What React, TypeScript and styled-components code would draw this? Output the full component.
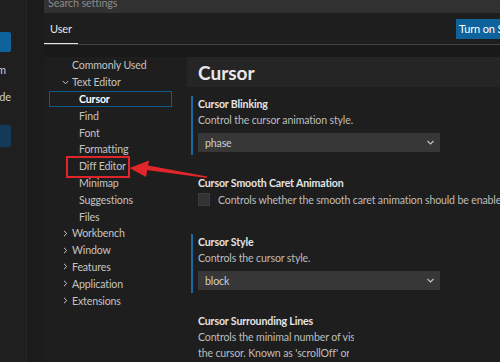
import React from "react";
import styled, { createGlobalStyle } from "styled-components";

const Global = createGlobalStyle`
  html, body { margin: 0; padding: 0; background: #1e1e1e; }
  body { width: 500px; height: 362px; overflow: hidden; font-family: Lato, "Noto Sans", sans-serif; }
  * { box-sizing: border-box; }
`;

const Page = styled.div`
  position: relative;
  display: flex;
  width: 500px;
  height: 362px;
  overflow: hidden;
  background: #1e1e1e;
  color: #cccccc;
  font-size: 10.6px;
  letter-spacing: -0.15px;
`;

const SideStrip = styled.div`
  width: 44px;
  flex: none;
  display: flex;
  background: #1b1b1b;
`;

const SideInner = styled.div`
  width: 27px;
  border-right: 1px solid #262626;
  background: #1f1f1f;
  overflow: hidden;
  display: flex;
  flex-direction: column;
  align-items: flex-end;
  padding-top: 32px;
`;

const SideButton = styled.div<{ $dim?: boolean; $top: number; $h: number }>`
  flex: none;
  width: 80px;
  height: ${(p) => p.$h}px;
  margin-top: ${(p) => p.$top}px;
  margin-right: 15px;
  border-radius: 2px;
  background: ${(p) => (p.$dim ? "#143a5a" : "#0e639c")};
`;

const SideLabel = styled.div<{ $top: number; $right: number }>`
  flex: none;
  line-height: 16px;
  font-size: 11px;
  margin-top: ${(p) => p.$top}px;
  margin-right: ${(p) => p.$right}px;
  white-space: nowrap;
  color: #cccccc;
`;

const Panel = styled.div`
  flex: 1;
  min-width: 0;
  display: flex;
  flex-direction: column;
`;

const SearchBar = styled.div`
  height: 13px;
  flex: none;
  background: #313131;
  display: flex;
  align-items: flex-end;
  overflow: hidden;
  padding-left: 4px;
`;

const SearchText = styled.span`
  line-height: 14px;
  margin-bottom: 3px;
  font-size: 10.8px;
  color: #8a8a8a;
  white-space: nowrap;
`;

const TabsRow = styled.div`
  height: 32px;
  flex: none;
  display: flex;
  border-bottom: 1px solid #45443c;
  overflow: hidden;
`;

const Tab = styled.div`
  flex: none;
  display: flex;
  align-items: center;
  padding: 0 6px;
  font-size: 11px;
  color: #e7e7e7;
  border-bottom: 1px solid #e7e7e7;
`;

const ButtonSlot = styled.div`
  flex: none;
  width: 44px;
  margin-left: auto;
  display: flex;
  align-items: center;
`;

const SyncButton = styled.div`
  flex: none;
  height: 20px;
  padding: 0 3px;
  display: flex;
  align-items: center;
  white-space: nowrap;
  font-size: 11px;
  background: #0e639c;
  color: #ffffff;
`;

const Band = styled.div`
  height: 12px;
  flex: none;
  background: #191919;
`;

const Body = styled.div`
  flex: 1;
  display: flex;
  min-height: 0;
`;

const Toc = styled.div`
  width: 143px;
  flex: none;
  padding-left: 5px;
  display: flex;
  flex-direction: column;
`;

const TocItem = styled.div<{ $indent: number; $selected?: boolean }>`
  width: 123px;
  height: 16.8px;
  display: flex;
  align-items: center;
  padding-left: ${(p) => p.$indent}px;
  white-space: nowrap;
  color: ${(p) => (p.$selected ? "#ffffff" : "#c4c4c4")};
  font-weight: ${(p) => (p.$selected ? 700 : 400)};
  box-shadow: ${(p) => (p.$selected ? "inset 0 0 0 1px #0f5a8a" : "none")};
`;

const Twisty = styled.span`
  width: 10px;
  flex: none;
  display: flex;
  align-items: center;
`;

const Content = styled.div`
  flex: 1;
  min-width: 0;
  display: flex;
  flex-direction: column;
  overflow: hidden;
`;

const Header = styled.div`
  height: 30px;
  flex: none;
  background: #252526;
  display: flex;
  align-items: center;
  padding-left: 11px;
  font-size: 19px;
  font-weight: 700;
  letter-spacing: 0;
  color: #e8e8e8;
`;

const SettingsList = styled.div`
  display: flex;
  flex-direction: column;
  gap: 20px;
  padding-top: 9px;
`;

const SettingItem = styled.div<{ $focused?: boolean; $bottom?: number }>`
  margin-left: 4px;
  border-left: 2px solid ${(p) => (p.$focused ? "#1a6aa3" : "transparent")};
  padding-left: 5px;
  padding-bottom: ${(p) => p.$bottom ?? 3}px;
`;

const Title = styled.div`
  line-height: 16px;
  font-weight: 700;
  color: #e4e4e4;
  white-space: nowrap;
`;

const Desc = styled.div<{ $clip?: number }>`
  line-height: 16px;
  color: #bdbdbd;
  white-space: nowrap;
  overflow: hidden;
  max-width: ${(p) => (p.$clip ? `${p.$clip}px` : "none")};
`;

const Select = styled.div`
  margin-top: 5px;
  width: 242px;
  height: 19px;
  background: #373737;
  display: flex;
  align-items: center;
  justify-content: space-between;
  padding: 0 5px 0 7px;
  color: #d0d0d0;
`;

const CheckRow = styled.div`
  margin-top: 2px;
  display: flex;
  align-items: center;
  gap: 8px;
  white-space: nowrap;
  color: #bdbdbd;
`;

const CheckBox = styled.div`
  width: 12px;
  height: 13px;
  flex: none;
  background: #333333;
  border: 1px solid #3b3b3b;
`;

const Overlay = styled.svg`
  position: absolute;
  left: 0;
  top: 0;
  pointer-events: none;
`;

const Chevron = ({ open }: { open?: boolean }) => (
  <svg width="7" height="7" viewBox="0 0 7 7">
    {open ? (
      <path d="M0.8 2 L3.5 4.8 L6.2 2" fill="none" stroke="#c5c5c5" strokeWidth="1" />
    ) : (
      <path d="M2 0.8 L4.8 3.5 L2 6.2" fill="none" stroke="#c5c5c5" strokeWidth="1" />
    )}
  </svg>
);

const SelectChevron = () => (
  <svg width="9" height="9" viewBox="0 0 9 9">
    <path d="M1.5 3 L4.5 6 L7.5 3" fill="none" stroke="#c5c5c5" strokeWidth="1.1" />
  </svg>
);

type TocEntry = { label: string; indent: number; twisty?: "open" | "closed"; selected?: boolean };

const tocItems: TocEntry[] = [
  { label: "Commonly Used", indent: 23 },
  { label: "Text Editor", indent: 13, twisty: "open" },
  { label: "Cursor", indent: 30, selected: true },
  { label: "Find", indent: 30 },
  { label: "Font", indent: 30 },
  { label: "Formatting", indent: 30 },
  { label: "Diff Editor", indent: 30 },
  { label: "Minimap", indent: 30 },
  { label: "Suggestions", indent: 30 },
  { label: "Files", indent: 30 },
  { label: "Workbench", indent: 13, twisty: "closed" },
  { label: "Window", indent: 13, twisty: "closed" },
  { label: "Features", indent: 13, twisty: "closed" },
  { label: "Application", indent: 13, twisty: "closed" },
  { label: "Extensions", indent: 13, twisty: "closed" },
];

export default function App() {
  return (
    <Page>
      <Global />
      <SideStrip>
        <SideInner>
          <SideButton $top={0} $h={20} />
          <SideLabel $top={10} $right={20}>Custom</SideLabel>
          <SideLabel $top={11} $right={15}>Mode</SideLabel>
          <SideButton $top={20} $h={22} $dim />
        </SideInner>
      </SideStrip>
      <Panel>
        <SearchBar>
          <SearchText>Search settings</SearchText>
        </SearchBar>
        <TabsRow>
          <Tab>User</Tab>
          <ButtonSlot>
            <SyncButton>Turn on Settings Sync</SyncButton>
          </ButtonSlot>
        </TabsRow>
        <Band />
        <Body>
          <Toc>
            {tocItems.map((t) => (
              <TocItem key={t.label} $indent={t.indent} $selected={t.selected}>
                {t.twisty && (
                  <Twisty>
                    <Chevron open={t.twisty === "open"} />
                  </Twisty>
                )}
                {t.label}
              </TocItem>
            ))}
          </Toc>
          <Content>
            <Header>Cursor</Header>
            <SettingsList>
              <SettingItem $focused>
                <Title>Cursor Blinking</Title>
                <Desc>Control the cursor animation style.</Desc>
                <Select>
                  <span>phase</span>
                  <SelectChevron />
                </Select>
              </SettingItem>
              <SettingItem $bottom={8}>
                <Title>Cursor Smooth Caret Animation</Title>
                <CheckRow>
                  <CheckBox />
                  <span>Controls whether the smooth caret animation should be enabled.</span>
                </CheckRow>
              </SettingItem>
              <SettingItem $focused>
                <Title>Cursor Style</Title>
                <Desc>Controls the cursor style.</Desc>
                <Select>
                  <span>block</span>
                  <SelectChevron />
                </Select>
              </SettingItem>
              <SettingItem>
                <Title>Cursor Surrounding Lines</Title>
                <Desc $clip={156}>Controls the minimal number of visible leading and trailing lines surrounding</Desc>
                <Desc $clip={151}>the cursor. Known as 'scrollOff' or 'scrollOffset' in some other editors.</Desc>
              </SettingItem>
            </SettingsList>
          </Content>
        </Body>
      </Panel>
      <Overlay width="500" height="362" viewBox="0 0 500 362">
        <rect x="67" y="157" width="62" height="20" fill="none" stroke="#e0262b" strokeWidth="2" />
        <path d="M147 165.2 L207 176.5 L207 178 L146.5 170 Z" fill="#e0262b" />
        <path d="M129.5 168 L149 160.5 L146 177 Z" fill="#e0262b" />
      </Overlay>
    </Page>
  );
}
